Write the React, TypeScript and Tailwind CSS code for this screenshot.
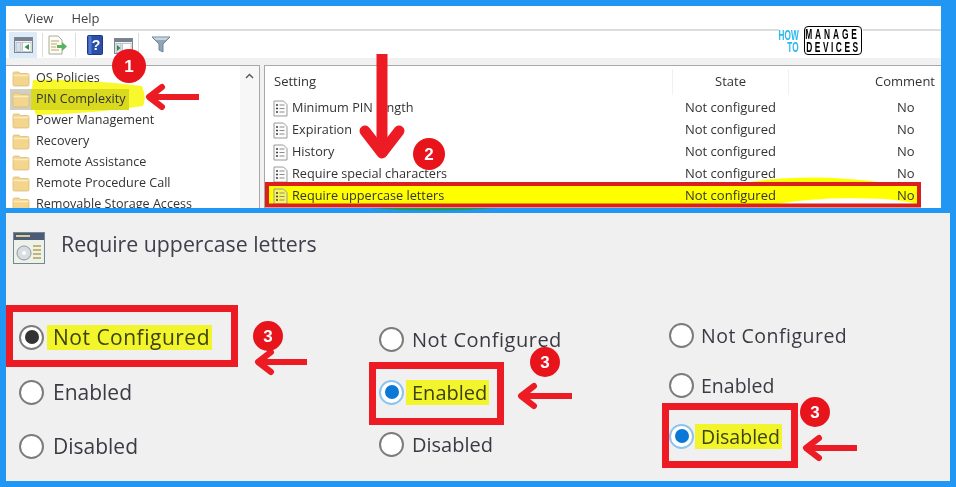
const font = { fontFamily: '"Open Sans", "Noto Sans", sans-serif' };

function Folder() {
  return (
    <svg width="18" height="17" viewBox="0 0 18 17" className="shrink-0">
      <path d="M1 3.5 Q1 2 2.5 2 H7 L8.5 3.5 H15.5 Q17 3.5 17 5 V14.5 Q17 16 15.5 16 H2.5 Q1 16 1 14.5 Z" fill="#f4d58d" stroke="#d9bb78" strokeWidth="0.8" />
      <path d="M1.5 5.5 H16.5" stroke="#fbecc4" strokeWidth="1.4" />
    </svg>
  );
}

function PolicyIcon({ yellow }: { yellow?: boolean }) {
  return (
    <svg width="15" height="17" viewBox="0 0 15 17" className="shrink-0">
      <path d="M1 1 H10.5 L14 4.5 V16 H1 Z" fill={yellow ? '#f6f45a' : '#fbfbfb'} stroke="#9a9a9a" strokeWidth="1" />
      <path d="M3 5 h2 M3 8.5 h2 M3 12 h2" stroke="#3c3c3c" strokeWidth="1.6" />
      <path d="M6.5 5 h5 M6.5 8.5 h5 M6.5 12 h5" stroke="#8c8c8c" strokeWidth="1" />
    </svg>
  );
}

function SnapIcon({ arrow }: { arrow: 'left' | 'right' }) {
  return (
    <svg width="19" height="16" viewBox="0 0 19 16">
      <rect x="0.5" y="0.5" width="18" height="15" fill="#f2f2f2" stroke="#7d8790" />
      <rect x="1" y="1" width="17" height="3" fill="#76838e" />
      <rect x="2" y="5.5" width="5" height="9" fill="#d8e2ea" stroke="#9aa8b4" strokeWidth="0.6" />
      <rect x="8.5" y="5.5" width="8.5" height="9" fill="#fff" stroke="#9aa8b4" strokeWidth="0.6" />
      {arrow === 'left'
        ? <path d="M15 7 L10.5 10 L15 13 Z" fill="#2f8f47" />
        : <path d="M3 7 L6.5 10 L3 13 Z" fill="#2f8f47" />}
    </svg>
  );
}

function ToolbarIcons() {
  return (
    <div className="flex items-center h-[27px]">
      <div className="w-[28px] h-[26px] ml-[3px] bg-[#dcebf7] flex items-center justify-center">
        <SnapIcon arrow="left" />
      </div>
      <div className="w-px h-[24px] bg-[#dddddd] ml-[5px]" />
      <svg width="20" height="20" viewBox="0 0 20 20" className="ml-[5px]">
        <path d="M1 1 H10 L14 5 V19 H1 Z" fill="#fdfdf3" stroke="#a9a9a0" />
        <path d="M3 6 h8 M3 9 h6 M3 12 h5 M3 15 h8" stroke="#b9a56c" strokeWidth="1" />
        <path d="M9 10 h5 V7 l5 4.5 l-5 4.5 v-3 h-5 Z" fill="#58b35e" />
      </svg>
      <div className="w-px h-[24px] bg-[#dddddd] ml-[7px]" />
      <svg width="16" height="20" viewBox="0 0 16 20" className="ml-[11px]">
        <rect x="0.5" y="0.5" width="15" height="19" rx="1" fill="#2b4fa8" stroke="#1d3a80" />
        <rect x="1.5" y="1" width="3" height="18" fill="#4e7bd0" />
        <text x="9" y="15" fontSize="14" fontWeight="700" fill="#fff" textAnchor="middle" fontFamily="Liberation Sans">?</text>
      </svg>
      <div className="ml-[11px] mt-[3px]"><SnapIcon arrow="right" /></div>
      <div className="w-px h-[24px] bg-[#dddddd] ml-[5px]" />
      <svg width="20" height="17" viewBox="0 0 20 17" className="ml-[12px]">
        <path d="M1 1 H19 L12 8 V16 L8 14 V8 Z" fill="#8fa6b8" stroke="#6f8494" />
        <path d="M2 1.5 H18 L15 4 H5 Z" fill="#c9d6df" />
      </svg>
    </div>
  );
}

function Logo() {
  return (
    <div className="absolute left-[779px] top-[26px] flex items-center gap-[5px] bg-white pl-[2px] pr-[1px]" style={{ fontFamily: '"Liberation Sans", sans-serif' }}>
      <div className="w-[18px] flex flex-col items-end text-[15px] leading-[12px] font-bold text-[#2bb8ee]">
        <span className="scale-x-[0.55] origin-right">HOW</span>
        <span className="scale-x-[0.55] origin-right">TO</span>
      </div>
      <div className="w-[58px] h-[29px] border-[1.5px] border-black rounded-[4px] flex flex-col items-center justify-center text-[14px] leading-[12.5px] font-bold text-black">
        <span className="scale-x-[0.6] tracking-[4.8px] whitespace-nowrap">MANAGE</span>
        <span className="scale-x-[0.6] tracking-[4.2px] whitespace-nowrap">DEVICES</span>
      </div>
    </div>
  );
}

const folders = ['OS Policies', 'PIN Complexity', 'Power Management', 'Recovery', 'Remote Assistance', 'Remote Procedure Call', 'Removable Storage Access'];
const settings = ['Minimum PIN length', 'Expiration', 'History', 'Require special characters', 'Require uppercase letters'];

function FolderPane() {
  return (
    <div className="relative w-[254px] h-full border-t border-[#a8a8a8] border-r bg-white overflow-hidden flex">
      <svg width="116" height="38" viewBox="0 0 116 38" className="absolute left-[24px] top-[12px]">
        <path d="M3 2 Q40 0 112 8 Q117 20 113 28 Q60 36 6 37 Q0 20 3 2 Z" fill="#f8f82c" />
      </svg>
      <div className="flex-1 pt-[2px] pl-[4px] relative">
        {folders.map(name => {
          const selected = name === 'PIN Complexity';
          return (
            <div key={name} className="h-[21px] flex items-center">
              <div className={`w-[21px] h-[21px] flex items-center justify-center ${selected ? 'bg-[#cfcfc4]' : ''}`}>
                <Folder />
              </div>
              <span className={`h-[21px] pl-[5px] pr-[3px] flex items-center text-[12.6px] text-[#333333] whitespace-nowrap ${selected ? 'bg-[#d9d91e]' : ''}`}>{name}</span>
            </div>
          );
        })}
      </div>
      <div className="w-[19px] bg-[#f7f7f7] flex justify-center pt-[7px]">
        <svg width="9" height="6" viewBox="0 0 9 6"><path d="M1 5 L4.5 1.5 L8 5" fill="none" stroke="#555" strokeWidth="1.4" /></svg>
      </div>
    </div>
  );
}

function SettingsPane() {
  return (
    <div className="relative flex-1 h-full border-t border-l border-[#a8a8a8] bg-white overflow-hidden text-[13px] text-[#333333]">
      <div className="flex h-[31px] pt-[1px]">
        <div className="w-[407px] pl-[9px] flex items-center">Setting</div>
        <div className="w-[117px] flex items-center justify-center border-l border-r border-[#f1f1f1] h-[26px] mt-[2px]">State</div>
        <div className="flex-1 flex items-center justify-end pr-[6px]">Comment</div>
      </div>
      {settings.map((name, i) => {
        const hit = i === 4;
        return (
          <div key={name} className={`relative w-[656px] h-[22px] flex items-center ${hit ? 'bg-[#ffff00]' : ''}`}>
            <div className="w-[26px] pl-[8px]"><PolicyIcon yellow={hit} /></div>
            <span className="w-[394px] pl-[1px] text-[12.7px]">{name}</span>
            <span className="w-[212px]">Not configured</span>
            <span>No</span>
          </div>
        );
      })}
    </div>
  );
}

function Radio({ state }: { state?: 'gray' | 'blue' }) {
  if (state === 'blue') {
    return (
      <span className="w-[25px] h-[25px] rounded-full border-2 border-[#8cc4ee] bg-white flex items-center justify-center shrink-0">
        <span className="w-[14px] h-[14px] rounded-full bg-[#0a78d7]" />
      </span>
    );
  }
  return (
    <span className="w-[25px] h-[25px] rounded-full border-2 border-[#7c7c7c] bg-white flex items-center justify-center shrink-0">
      {state === 'gray' && <span className="w-[14px] h-[14px] rounded-full bg-[#333333]" />}
    </span>
  );
}

function Option({ label, state, mark, size, gap }: { label: string; state?: 'gray' | 'blue'; mark?: boolean; size: string; gap: string }) {
  const spaced = label === 'Not Configured' ? 'tracking-[0.5px]' : '';
  return (
    <div className={`flex items-center h-[26px] ${gap}`}>
      <Radio state={state} />
      <span className={`${size} ${spaced} leading-[25px] text-[#3a3a42] whitespace-nowrap ${mark ? '-ml-[6px] pl-[6px] pr-[2px] bg-[#f2f42c] text-[#3d4210]' : ''}`}>{label}</span>
    </div>
  );
}

function Annotations() {
  const red = '#ed1c24';
  const badges = [
    { n: '1', x: 129, y: 66, r: 17 },
    { n: '2', x: 429, y: 154, r: 16 },
    { n: '3', x: 268, y: 336, r: 15 },
    { n: '3', x: 545, y: 362, r: 15 },
    { n: '3', x: 815, y: 412, r: 15 },
  ];
  return (
    <svg width="956" height="487" viewBox="0 0 956 487" className="absolute left-0 top-0 pointer-events-none">
      <path d="M745 183 Q810 172 885 183 Z" fill="#ffff00" />
      <path d="M777 204 Q820 196 885 199 Q905 201 917 204 Z" fill="#ffffff" />
      <rect x="267" y="184" width="652" height="21.5" fill="none" stroke="#d9201c" strokeWidth="4" />
      <rect x="9.5" y="308.5" width="225" height="55" fill="none" stroke={red} strokeWidth="7" />
      <rect x="372.5" y="365.5" width="128" height="56" fill="none" stroke={red} strokeWidth="7" />
      <rect x="665.5" y="406.5" width="129" height="58" fill="none" stroke={red} strokeWidth="7" />
      <path d="M370 208 Q430 213 498 208 Z" fill="#1f9d55" />
      <g fill="none" stroke={red} strokeLinecap="round" strokeLinejoin="round">
        <path d="M382 54 V152" strokeWidth="11" strokeLinecap="butt" />
        <path d="M365 131 L382 153 L399 131" strokeWidth="11" />
        <path d="M199 97 H151" strokeWidth="6" strokeLinecap="butt" />
        <path d="M162 87 L149 97 L162 107" strokeWidth="6" />
        <path d="M307 362 H259" strokeWidth="6" strokeLinecap="butt" />
        <path d="M271 352 L258 362 L271 372" strokeWidth="6" />
        <path d="M572 396 H524" strokeWidth="6" strokeLinecap="butt" />
        <path d="M534 386 L521 396 L534 406" strokeWidth="6" />
        <path d="M857 448 H809" strokeWidth="6" strokeLinecap="butt" />
        <path d="M819 438 L806 448 L819 458" strokeWidth="6" />
      </g>
      {badges.map(b => (
        <g key={`${b.x}`}>
          <circle cx={b.x} cy={b.y} r={b.r} fill="#e8141c" />
          <text x={b.x} y={b.y + 6} textAnchor="middle" fontSize="17" fontWeight="700" fill="#fff" fontFamily="Liberation Sans">{b.n}</text>
        </g>
      ))}
    </svg>
  );
}

export default function App() {
  return (
    <div className="relative w-[956px] h-[487px] bg-[#2196f3] overflow-hidden pt-[6px] pl-[6px] blur-[0.35px]" style={font}>
      {/* top: group policy editor */}
      <div className="w-[935px] h-[202px] bg-white flex flex-col">
        <div className="h-[25px] pt-[2px] flex items-center gap-[18px] pl-[19px] text-[13px] text-[#444444] border-b-2 border-[#dcdcdc]">
          <span>View</span>
          <span>Help</span>
        </div>
        <ToolbarIcons />
        <div className="h-[7px] bg-[#f1f1f1]" />
        <div className="flex-1 min-h-0 flex bg-[#f1f1f1]">
          <FolderPane />
          <div className="w-[4px]" />
          <SettingsPane />
        </div>
      </div>
      <Logo />

      {/* bottom: policy dialog options */}
      <div className="mt-[5px] w-[944px] h-[268px] bg-[#f0f0f0] flex flex-col">
        <div className="flex items-center h-[70px] pl-[7px] gap-[16px]">
          <svg width="32" height="32" viewBox="0 0 32 32" className="shrink-0">
            <rect x="0.5" y="0.5" width="31" height="31" fill="#eef0ea" stroke="#6f8a90" />
            <rect x="1" y="1" width="30" height="7" fill="#4d5b78" />
            <path d="M3 4 h14" stroke="#d9cf8f" strokeWidth="2" />
            <circle cx="11" cy="21" r="7" fill="#d7dde0" stroke="#8d99a0" />
            <circle cx="11" cy="21" r="2" fill="#fff" />
            <path d="M20 14 h8 M20 18 h8 M20 22 h8 M20 26 h8" stroke="#b5a24e" strokeWidth="1.6" />
          </svg>
          <span className="text-[21.3px] text-[#40404c] whitespace-nowrap -mt-[8px]">Require uppercase letters</span>
        </div>
        <div className="flex">
          <div className="w-[368px] pl-[13px] pt-[41px]">
            <Option label="Not Configured" state="gray" mark size="text-[21px]" gap="gap-[9px]" />
            <div className="mt-[29px]"><Option label="Enabled" size="text-[21px]" gap="gap-[9px]" /></div>
            <div className="mt-[28px]"><Option label="Disabled" size="text-[21px]" gap="gap-[9px]" /></div>
          </div>
          <div className="w-[289px] pl-[5px] pt-[43px]">
            <Option label="Not Configured" size="text-[20px]" gap="gap-[8px]" />
            <div className="mt-[27px]"><Option label="Enabled" state="blue" mark size="text-[20px]" gap="gap-[8px]" /></div>
            <div className="mt-[26px]"><Option label="Disabled" size="text-[20px]" gap="gap-[8px]" /></div>
          </div>
          <div className="flex-1 pl-[6px] pt-[39px]">
            <Option label="Not Configured" size="text-[19.5px]" gap="gap-[7px]" />
            <div className="mt-[24px]"><Option label="Enabled" size="text-[19.5px]" gap="gap-[7px]" /></div>
            <div className="mt-[25px]"><Option label="Disabled" state="blue" mark size="text-[19.5px]" gap="gap-[7px]" /></div>
          </div>
        </div>
      </div>

      <Annotations />
    </div>
  );
}
